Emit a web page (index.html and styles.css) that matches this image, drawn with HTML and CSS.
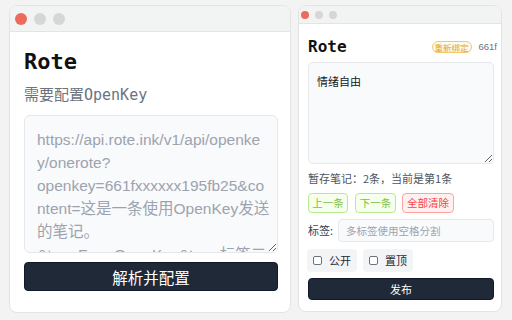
FILE: index.html
```html
<!DOCTYPE html>
<html lang="zh-CN">
<head>
<meta charset="utf-8">
<title>Rote</title>
<link rel="stylesheet" href="styles.css">
</head>
<body>
  <section class="win win-l">
    <div class="bar bar-l">
      <span class="dot dot-l red"></span><span class="dot dot-l"></span><span class="dot dot-l"></span>
    </div>
    <div class="body-l">
      <h1 class="title-l">Rote</h1>
      <p class="sub">需要配置OpenKey</p>
      <textarea class="ta-l" placeholder="https://api.rote.ink/v1/api/openke&#10;y/onerote?&#10;openkey=661fxxxxxx195fb25&amp;co&#10;ntent=这是一条使用OpenKey发送&#10;的笔记。&#10;&amp;tag=FromOpenKey&amp;tag=标签二&#10;&amp;state=private"></textarea>
      <button class="btn-dark btn-l">解析并配置</button>
    </div>
  </section>

  <section class="win win-r">
    <div class="bar bar-r">
      <span class="dot dot-r red"></span><span class="dot dot-r"></span><span class="dot dot-r"></span>
    </div>
    <div class="body-r">
      <div class="head-r">
        <h2 class="title-r">Rote</h2>
        <span class="badge">重新绑定</span>
        <span class="key">661f</span>
      </div>
      <textarea class="ta-r">情绪自由</textarea>
      <p class="status">暂存笔记：2条，当前是第1条</p>
      <div class="nav">
        <button class="chip-btn green w40">上一条</button>
        <button class="chip-btn green w41">下一条</button>
        <button class="chip-btn red-btn w52">全部清除</button>
      </div>
      <div class="tag-row">
        <label class="tag-label" for="tags">标签:</label>
        <input id="tags" class="tag-input" placeholder="多标签使用空格分割">
      </div>
      <div class="checks">
        <label class="check"><input type="checkbox" class="box"><span>公开</span></label>
        <label class="check"><input type="checkbox" class="box"><span>置顶</span></label>
      </div>
      <button class="btn-dark btn-r">发布</button>
    </div>
  </section>
</body>
</html>
```
FILE: styles.css
```css
html, body {
  margin: 0;
  height: 100%;
}
body {
  box-sizing: border-box;
  height: 320px;
  padding: 5px 10px 7px 9px;
  background: #f3f3f3;
  display: flex;
  gap: 7px;
  font-family: "Liberation Sans", "Noto Sans CJK SC", sans-serif;
  overflow: hidden;
}
.win {
  box-sizing: border-box;
  background: #fff;
  border: 1px solid #e3e3e3;
  border-radius: 8px;
  overflow: hidden;
  display: flex;
  flex-direction: column;
}
.win-l { width: 282px; }
.win-r { width: 204px; height: 307px; }

.bar {
  flex: none;
  display: flex;
  align-items: center;
  background: #f2f3f3;
  border-bottom: 1px solid #e4e4e4;
}
.bar-l { height: 25px; padding-left: 5px; gap: 7px; }
.bar-r { height: 17px; padding-left: 2px; gap: 6px; }
.dot { border-radius: 50%; background: #d6d6d6; display: block; }
.dot-l { width: 12px; height: 12px; }
.dot-r { width: 8px; height: 8px; }
.dot.red { background: #ec6a5e; }

/* left window */
.body-l {
  padding: 16px 12px 0 14px;
  display: flex;
  flex-direction: column;
}
.title-l {
  margin: 0;
  font: bold 22px/28px "DejaVu Sans Mono", monospace;
  color: #111;
}
.sub {
  margin: 9px 0 0;
  font: 15px/20px "DejaVu Sans Mono", "Noto Sans CJK SC", monospace;
  color: #6b7280;
}
.ta-l {
  box-sizing: border-box;
  margin-top: 10px;
  width: 100%;
  height: 138px;
  background: #f9fafb;
  border: 1px solid #e5e7eb;
  border-radius: 6px;
  padding: 12px 12px;
  font: 15.5px/23px "Liberation Sans", "Noto Sans CJK SC", sans-serif;
  color: #374151;
  resize: vertical;
  overflow: hidden;
  white-space: pre;
}
.ta-l::placeholder { color: #9ca3af; }
.btn-dark {
  box-sizing: border-box;
  display: flex;
  align-items: center;
  justify-content: center;
  width: 100%;
  background: #1f2937;
  color: #fff;
  border: 1px solid #111827;
  font-family: "Noto Sans CJK SC", sans-serif;
  padding: 0;
}
.btn-l {
  margin-top: 9px;
  height: 29px;
  border-radius: 4px;
  font-size: 15.5px;
}

/* right window */
.body-r {
  padding: 13px 7px 0 9px;
  display: flex;
  flex-direction: column;
}
.head-r {
  display: flex;
  align-items: center;
  height: 20px;
  white-space: nowrap;
}
.title-r {
  margin: 0;
  font: bold 16px/20px "DejaVu Sans Mono", monospace;
  color: #111;
}
.badge {
  margin-left: auto;
  box-sizing: border-box;
  width: 40px;
  height: 12px;
  border: 1px solid #f2c86a;
  border-radius: 6px;
  background: #fffbeb;
  color: #e0a52a;
  font: 8.5px/10px "Noto Sans CJK SC", sans-serif;
  text-align: center;
}
.key {
  margin-left: 7px;
  margin-right: -3px;
  font: 9.5px/12px "Liberation Sans", sans-serif;
  color: #6b7280;
}
.ta-r {
  box-sizing: border-box;
  margin-top: 5px;
  width: 100%;
  height: 102px;
  background: #f9fafb;
  border: 1px solid #e5e7eb;
  border-radius: 5px;
  padding: 10px 8px;
  font: 11px/16px "Noto Sans CJK SC", sans-serif;
  color: #111827;
  resize: vertical;
}
.status {
  margin: 7px 0 0;
  font: 11px/15px "Noto Sans CJK SC", sans-serif;
  color: #4b5563;
}
.nav {
  margin-top: 7px;
  display: flex;
  gap: 7px;
}
.chip-btn {
  box-sizing: border-box;
  height: 20px;
  padding: 0;
  border-radius: 4px;
  font: 10.5px/18px "Noto Sans CJK SC", sans-serif;
}
.w40 { width: 40px; }
.w41 { width: 41px; margin-left: 0; }
.w52 { width: 52px; margin-left: -1px; }
.green {
  border: 1px solid #b7eb8f;
  background: #f6ffed;
  color: #7cc242;
}
.red-btn {
  border: 1px solid #ffa39e;
  background: #fff1f0;
  color: #f5443f;
}
.tag-row {
  margin-top: 6px;
  display: flex;
  align-items: center;
  gap: 5px;
}
.tag-label {
  width: 25px;
  font: 11px/15px "Noto Sans CJK SC", sans-serif;
  color: #374151;
  white-space: nowrap;
}
.tag-input {
  box-sizing: border-box;
  flex: 1;
  min-width: 0;
  height: 23px;
  background: #f9fafb;
  border: 1px solid #e5e7eb;
  border-radius: 4px;
  padding: 0 7px;
  font: 10.5px "Noto Sans CJK SC", sans-serif;
  color: #111827;
  outline: none;
}
.tag-input::placeholder { color: #9ca3af; }
.checks {
  margin-top: 7px;
  display: flex;
  gap: 6px;
  margin-left: -1px;
}
.check {
  box-sizing: border-box;
  width: 50px;
  height: 23px;
  background: #f3f4f6;
  border-radius: 4px;
  padding: 0 6px;
  display: flex;
  align-items: center;
  gap: 7px;
  font: 11px/15px "Noto Sans CJK SC", sans-serif;
  color: #1f2937;
}
.box {
  appearance: none;
  -webkit-appearance: none;
  margin: 0;
  width: 9px;
  height: 9px;
  border: 1px solid #6b7280;
  border-radius: 2px;
  background: #fff;
  flex: none;
}
.btn-r {
  margin-top: 6px;
  height: 22px;
  border-radius: 4px;
  font-size: 11px;
}
```
